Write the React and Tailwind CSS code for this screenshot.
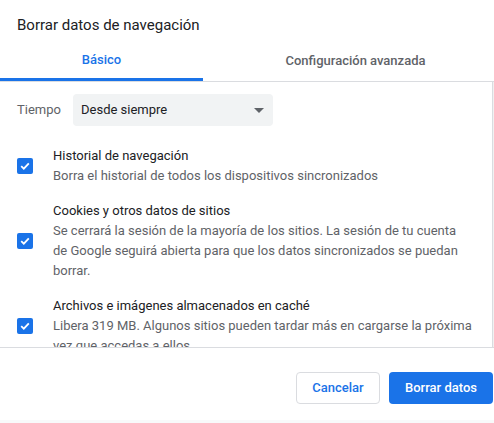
import React from 'react';

const items = [
  {
    title: 'Historial de navegación',
    desc: ['Borra el historial de todos los dispositivos sincronizados'],
  },
  {
    title: 'Cookies y otros datos de sitios',
    desc: [
      'Se cerrará la sesión de la mayoría de los sitios. La sesión de tu cuenta',
      'de Google seguirá abierta para que los datos sincronizados se puedan',
      'borrar.',
    ],
  },
  {
    title: 'Archivos e imágenes almacenados en caché',
    desc: [
      'Libera 319 MB. Algunos sitios pueden tardar más en cargarse la próxima',
      'vez que accedas a ellos.',
    ],
  },
];

const Check = () => (
  <div className="w-4 h-4 rounded-[2px] bg-[#1a73e8] flex items-center justify-center shrink-0">
    <svg width="12" height="12" viewBox="0 0 12 12">
      <path d="M2.2 6.2 L4.8 8.7 L9.8 3.4" fill="none" stroke="white" strokeWidth="1.8" />
    </svg>
  </div>
);

export default function App() {
  return (
    <div className="w-[494px] h-[423px] bg-white flex flex-col font-['Roboto',sans-serif] text-[13px] overflow-hidden">
      <h1 className="pt-[15px] px-[17px] text-[15px] leading-[20px] text-[#202124] font-normal">
        Borrar datos de navegación
      </h1>

      {/* tabs */}
      <div className="flex h-[41px] mt-[5px] font-medium">
        <div className="w-[203px] flex items-center justify-center pt-[1px] text-[#1a73e8] border-b-[3px] border-[#1a73e8]">
          Básico
        </div>
        <div className="flex-1 flex items-center justify-center pl-[14px] pt-[1px] text-[#5f6368]">
          Configuración avanzada
        </div>
      </div>

      {/* scroll area */}
      <div className="flex h-[267px] border-t border-b border-[#dadce0]">
        <div className="flex-1 overflow-hidden border-r border-[#dadce0]">
          <div className="flex items-center px-[17px] pt-[12px]">
            <span className="text-[#5f6368] w-[56px]">Tiempo</span>
            <div className="w-[200px] h-[32px] rounded-[4px] bg-[#f1f3f4] flex items-center justify-between pl-[8px] pr-[9px] text-[#202124]">
              <span>Desde siempre</span>
              <svg width="10" height="5" viewBox="0 0 10 5">
                <path d="M0 0 L10 0 L5 5 Z" fill="#5f6368" />
              </svg>
            </div>
          </div>

          <div className="flex flex-col gap-[15px] pt-[20px]">
            {items.map((it) => (
              <div key={it.title} className="flex items-center px-[17px]">
                <Check />
                <div className="pl-[20px] leading-[20px]">
                  <div className="text-[#202124]">{it.title}</div>
                  {it.desc.map((d) => (
                    <div key={d} className="text-[#5f6368]">{d}</div>
                  ))}
                </div>
              </div>
            ))}
          </div>
        </div>
        <div className="w-[1px] bg-[#f1f1f1]" />
      </div>

      {/* footer */}
      <div className="flex justify-end gap-[9px] pt-[24px] pr-[1px]">
        <button className="w-[84px] h-[32px] rounded-[4px] border border-[#dadce0] bg-white text-[#1a73e8] font-medium">
          Cancelar
        </button>
        <button className="w-[104px] h-[32px] rounded-[4px] bg-[#1a73e8] text-white font-medium">
          Borrar datos
        </button>
      </div>
      <div className="flex-1" />
      <div className="h-[3px] bg-[#f8f9fa]" />
    </div>
  );
}
